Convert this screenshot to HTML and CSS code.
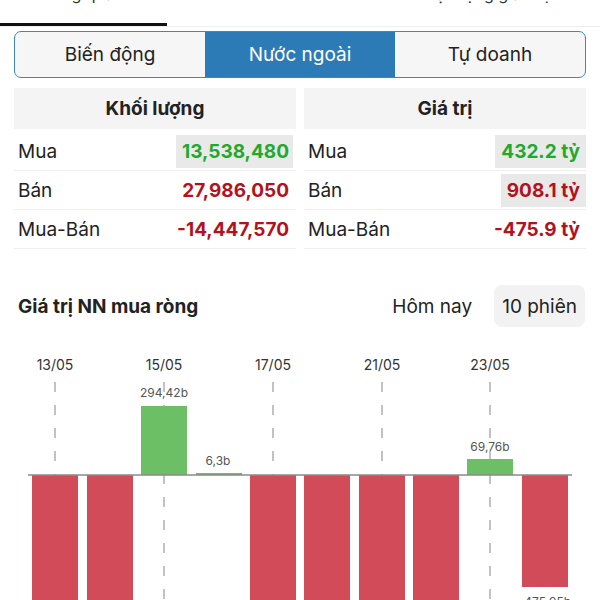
FILE: index.html
```html
<!DOCTYPE html>
<html lang="vi">
<head>
<meta charset="utf-8">
<link rel="stylesheet" href="styles.css">
</head>
<body>
<div class="topnav">
  <div class="topnav-item active"><span class="topnav-label">Tổng quan</span></div>
  <div class="topnav-item"><span class="topnav-label">Hồ sơ</span></div>
  <div class="topnav-item"><span class="topnav-label">Hoạt động giao dịch</span></div>
</div>

<div class="segmented">
  <div class="seg">Biến động</div>
  <div class="seg seg-active">Nước ngoài</div>
  <div class="seg">Tự doanh</div>
</div>

<div class="tables">
  <div class="table">
    <div class="thead">Khối lượng</div>
    <div class="trow"><span class="label">Mua</span><span class="val up hl">13,538,480</span></div>
    <div class="trow"><span class="label">Bán</span><span class="val down">27,986,050</span></div>
    <div class="trow"><span class="label">Mua-Bán</span><span class="val down">-14,447,570</span></div>
  </div>
  <div class="table table-right">
    <div class="thead">Giá trị</div>
    <div class="trow"><span class="label">Mua</span><span class="val up hl">432.2 tỷ</span></div>
    <div class="trow"><span class="label">Bán</span><span class="val down hl">908.1 tỷ</span></div>
    <div class="trow"><span class="label">Mua-Bán</span><span class="val down">-475.9 tỷ</span></div>
  </div>
</div>

<div class="chart-head">
  <div class="chart-title">Giá trị NN mua ròng</div>
  <div class="periods">
    <span class="period">Hôm nay</span>
    <span class="period period-active">10 phiên</span>
  </div>
</div>

<svg class="chart" width="600" height="262" viewBox="0 338 600 262">
  <g class="dates" font-size="14" fill="#333" text-anchor="middle">
    <text x="55" y="370">13/05</text>
    <text x="164" y="370">15/05</text>
    <text x="273" y="370">17/05</text>
    <text x="382" y="370">21/05</text>
    <text x="490" y="370">23/05</text>
  </g>
  <g stroke="#9a9a9a" stroke-width="1.2" stroke-dasharray="10 13">
    <line x1="55" y1="382" x2="55" y2="600"/>
    <line x1="164" y1="382" x2="164" y2="600"/>
    <line x1="273" y1="382" x2="273" y2="600"/>
    <line x1="382" y1="382" x2="382" y2="600"/>
    <line x1="490" y1="382" x2="490" y2="600"/>
  </g>
  <g fill="#d24b58">
    <rect x="32" y="475" width="46" height="130"/>
    <rect x="87" y="475" width="46" height="130"/>
    <rect x="250" y="475" width="46" height="130"/>
    <rect x="304" y="475" width="46" height="130"/>
    <rect x="359" y="475" width="46" height="130"/>
    <rect x="413" y="475" width="46" height="130"/>
    <rect x="522" y="475" width="46" height="112"/>
  </g>
  <g fill="#6cbf64">
    <rect x="141" y="406" width="46" height="69"/>
    <rect x="196" y="473" width="46" height="2"/>
    <rect x="467" y="459" width="46" height="16"/>
  </g>
  <line x1="28" y1="475" x2="572" y2="475" stroke="#8a8a8a" stroke-width="1.5"/>
  <g font-size="12" fill="#555" text-anchor="middle">
    <text x="164" y="397">294,42b</text>
    <text x="218" y="465">6,3b</text>
    <text x="490" y="451">69,76b</text>
    <text x="545" y="606">-475,95b</text>
  </g>
</svg>
</body>
</html>
```

FILE: styles.css
```css
* { box-sizing: border-box; }

html, body {
  margin: 0;
  padding: 0;
  background: #ffffff;
}

body {
  width: 600px;
  height: 600px;
  overflow: hidden;
  font-family: Inter, "Noto Sans", "Liberation Sans", sans-serif;
  color: #222;
}

.topnav {
  display: flex;
  height: 27px;
  border-bottom: 1px solid #eeeeee;
  overflow: hidden;
}

.topnav-item {
  width: 167px;
  height: 26px;
  display: flex;
  justify-content: center;
  align-items: flex-start;
  border-bottom: 3px solid transparent;
  margin-bottom: 1px;
}

.topnav-item + .topnav-item {
  width: 216px;
}

.topnav-item.active {
  border-bottom-color: #111;
}

.topnav-label {
  font-size: 16px;
  line-height: 16px;
  margin-top: -14px;
  color: #333;
}

.segmented {
  display: flex;
  margin: 4px 14px 0;
  height: 47px;
  border: 1.5px solid #3d87c0;
  border-radius: 7px;
  overflow: hidden;
  background: #f6f6f6;
}

.seg {
  flex: 1;
  display: flex;
  align-items: center;
  justify-content: center;
  font-size: 19px;
  color: #222;
}

.seg-active {
  background: #2c7bb6;
  color: #ffffff;
}

.tables {
  display: grid;
  grid-template-columns: 282px 282px;
  column-gap: 8px;
  margin: 10px 14px 0;
}

.thead {
  height: 41px;
  background: #f4f4f4;
  display: flex;
  align-items: center;
  justify-content: center;
  font-weight: 700;
  font-size: 19px;
  color: #222;
}

.trow {
  display: flex;
  align-items: center;
  justify-content: space-between;
  height: 39px;
  border-bottom: 1px solid #efefef;
  padding: 0 3px 0 4px;
}

.table .thead + .trow {
  height: 42px;
  padding-top: 3px;
}

.table-right .trow {
  padding-right: 0;
}

.label {
  font-size: 19px;
  color: #222;
}

.val {
  font-size: 19px;
  font-weight: 700;
  padding: 0 4px 0 6px;
  height: 33px;
  display: flex;
  align-items: center;
}

.table-right .val {
  padding: 0 6px;
}

.hl {
  background: #e9e9e9;
}

.up { color: #1faa2d; }
.down { color: #b3121c; }

.chart-head {
  display: flex;
  justify-content: space-between;
  align-items: center;
  margin: 36px 15px 0 18px;
}

.chart-title {
  font-size: 19px;
  font-weight: 700;
  color: #222;
}

.periods {
  display: flex;
  align-items: center;
  gap: 14px;
}

.period {
  font-size: 19px;
  color: #222;
  padding: 0 8px;
  height: 42px;
  display: flex;
  align-items: center;
  border-radius: 8px;
}

.period-active {
  background: #f2f2f2;
}

.chart {
  display: block;
  margin-top: 11px;
  font-family: Inter, "Noto Sans", "Liberation Sans", sans-serif;
}
```
